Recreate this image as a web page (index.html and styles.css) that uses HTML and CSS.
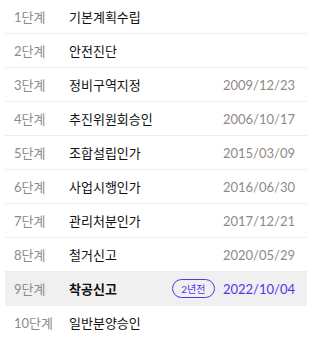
FILE: index.html
```html
<!DOCTYPE html>
<html lang="ko">
<head>
<meta charset="utf-8">
<link rel="stylesheet" href="styles.css">
</head>
<body>
<ul class="steps">
  <li class="row"><span class="lbl">1단계</span><span class="name">기본계획수립</span></li>
  <li class="row"><span class="lbl">2단계</span><span class="name">안전진단</span></li>
  <li class="row"><span class="lbl">3단계</span><span class="name">정비구역지정</span><span class="date">2009/12/23</span></li>
  <li class="row"><span class="lbl">4단계</span><span class="name">추진위원회승인</span><span class="date">2006/10/17</span></li>
  <li class="row"><span class="lbl">5단계</span><span class="name">조합설립인가</span><span class="date">2015/03/09</span></li>
  <li class="row"><span class="lbl">6단계</span><span class="name">사업시행인가</span><span class="date">2016/06/30</span></li>
  <li class="row"><span class="lbl">7단계</span><span class="name">관리처분인가</span><span class="date">2017/12/21</span></li>
  <li class="row"><span class="lbl">8단계</span><span class="name">철거신고</span><span class="date">2020/05/29</span></li>
  <li class="row current"><span class="lbl">9단계</span><span class="name">착공신고</span><span class="badge">2년전</span><span class="date">2022/10/04</span></li>
  <li class="row last"><span class="lbl">10단계</span><span class="name">일반분양승인</span></li>
</ul>
</body>
</html>
```
FILE: styles.css
```css
html, body {
  margin: 0;
  padding: 0;
  background: #fff;
}
body {
  font-family: Lato, "Noto Sans CJK KR", sans-serif;
  font-size: 13px;
}
.steps {
  list-style: none;
  margin: 0 6px 0 5px;
  padding: 0;
}
.row {
  display: flex;
  align-items: center;
  height: 33px;
  padding: 0 12px 0 9px;
  border-bottom: 1px solid #eeeeee;
}
.row.last {
  border-bottom: none;
}
.row.current {
  background: #f0f0f0;
}
.lbl {
  width: 55px;
  flex: none;
  color: #8f8a86;
}
.name {
  flex: 1;
  color: #111;
}
.current .name {
  font-weight: 700;
}
.date {
  color: #8f8a86;
}
.current .date {
  color: #4b37f0;
}
.badge {
  display: inline-flex;
  align-items: center;
  justify-content: center;
  box-sizing: border-box;
  height: 19px;
  width: 43px;
  margin-right: 8px;
  border: 1px solid #4b37f0;
  border-radius: 10px;
  color: #4b37f0;
  font-size: 10px;
}
```
